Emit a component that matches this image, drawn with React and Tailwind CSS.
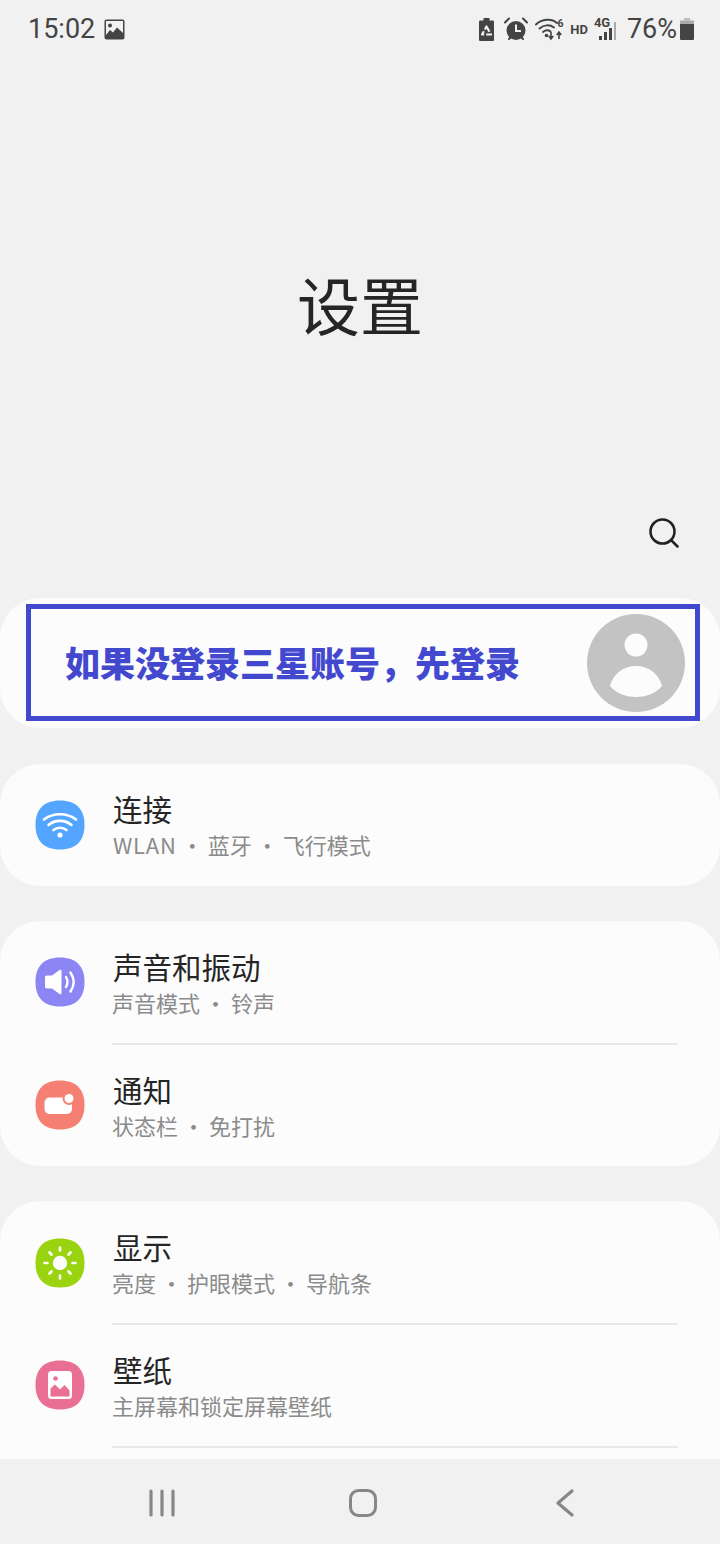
import { Search } from 'lucide-react'

const cjk = { fontFamily: '"Noto Sans CJK SC", "Noto Sans", sans-serif' }
const roboto = { fontFamily: 'Roboto, sans-serif' }

const Squircle = ({ color, children }) => (
  <svg width="50" height="50" viewBox="0 0 50 50" className="shrink-0">
    <path d="M25 0.5C41 0.5 49.5 9 49.5 25S41 49.5 25 49.5 0.5 41 0.5 25 9 0.5 25 0.5Z" fill={color} />
    {children}
  </svg>
)

const WifiIcon = () => (
  <Squircle color="#53a5ff">
    <g fill="none" stroke="#fff" strokeWidth="2.6" strokeLinecap="round">
      <path d="M9 19.5C18 12.5 32 12.5 41 19.5" />
      <path d="M13.5 25C20 19.5 30 19.5 36.5 25" />
      <path d="M18.5 30C22 27 28 27 31.500 30" />
    </g>
    <circle cx="25" cy="35" r="2.600" fill="#fff" />
  </Squircle>
)

const SoundIcon = () => (
  <Squircle color="#8c85f4">
    <path d="M10 20.5C10 19.2 10.8 18.5 12 18.5H17L24.5 13C25.6 12.3 26.5 12.8 26.5 14V36C26.5 37.2 25.6 37.7 24.5 37L17 31.5H12C10.8 31.5 10 30.8 10 29.5Z" fill="#fff" />
    <g fill="none" stroke="#fff" strokeWidth="2.4" strokeLinecap="round">
      <path d="M31 20C32.8 23 32.8 27 31 30" />
      <path d="M35.5 15.5C39.5 21.5 39.5 28.5 35.5 34.5" />
    </g>
  </Squircle>
)

const NotifyIcon = () => (
  <Squircle color="#f57f72">
    <rect x="9.500" y="17.500" width="27.500" height="16.500" rx="5" fill="#fff" />
    <circle cx="34" cy="18.500" r="6.500" fill="#f57f72" />
    <circle cx="34" cy="18.500" r="4.500" fill="#fff" />
  </Squircle>
)

const DisplayIcon = () => (
  <Squircle color="#9ad30f">
    <circle cx="25" cy="25" r="7.200" fill="#fff" />
    <g stroke="#fff" strokeWidth="2.600" strokeLinecap="round">
      <path d="M25 9.500V12.500" />
      <path d="M25 37.500V40.500" />
      <path d="M9.500 25H12.500" />
      <path d="M37.500 25H40.500" />
      <path d="M14.500 14.500L16.500 16.500" />
      <path d="M33.500 33.500L35.500 35.500" />
      <path d="M35.500 14.500L33.500 16.500" />
      <path d="M16.500 33.500L14.500 35.500" />
    </g>
  </Squircle>
)

const WallpaperIcon = () => (
  <Squircle color="#e96f95">
    <rect x="13" y="11" width="24" height="28" rx="3.500" fill="#fff" />
    <circle cx="20.500" cy="18.500" r="2.300" fill="#e96f95" />
    <path d="M15.500 36.500V28.500L20 24.500L25 29.500L29.500 25L34.500 30.500V36.500Z" fill="#e96f95" />
  </Squircle>
)

const Row = ({ icon, title, sub, divider, height, iconShift = '' }) => (
  <div className={`flex items-center pl-[35px] ${height}`}>
    <div className={`shrink-0 flex ${iconShift}`}>{icon}</div>
    <div className={`ml-[27px] mr-[42px] flex-1 h-full flex flex-col justify-center pb-[2px] ${divider ? 'border-b-2 border-[#e9e9e9] pt-[1px]' : ''}`}>
      <div className="pl-[1px] text-[29.5px] leading-[38px] text-[#252525]" style={cjk}>{title}</div>
      <div className="mt-[2px] text-[22px] leading-[30px] text-[#8b8b8b]" style={cjk}>{sub}</div>
    </div>
  </div>
)

const Dot = () => <span className="mx-[4.5px] text-[#8b8b8b]">•</span>

export default function App() {
  return (
    <div className="w-[720px] h-[1544px] bg-[#f1f1f1] flex flex-col overflow-hidden" style={cjk}>
      <div className="h-[58px] px-[26px] flex items-center justify-between shrink-0 text-[#444444]">
        <div className="flex items-center gap-[9px] pl-[2px]">
          <span className="text-[27px] leading-none" style={roboto}>15:02</span>
          <svg width="21" height="21" viewBox="0 0 21 21">
            <rect x="0.500" y="0.500" width="20" height="20" rx="2" fill="#444" />
            <rect x="2" y="2" width="17" height="14" fill="#f1f1f1" />
            <circle cx="6" cy="6.500" r="2" fill="#444" />
            <path d="M2 16L6 11L9 13.500L13 8.500L19 14V17H2Z" fill="#444" />
          </svg>
        </div>
        <div className="flex items-center">
          <svg width="15" height="23" viewBox="0 0 15 23" className="mr-[10px]">
            <path d="M4.500 0H10.500V2.500H13.500C14.500 2.500 15 3 15 4V21.500C15 22.500 14.500 23 13.500 23H1.500C0.500 23 0 22.500 0 21.500V4C0 3 0.500 2.500 1.500 2.500H4.500Z" fill="#444" />
            <path d="M7.500 8.500L12 16.500H3Z" fill="none" stroke="#f1f1f1" strokeWidth="2.200" strokeDasharray="6 2" strokeLinejoin="round" />
          </svg>
          <svg width="24" height="24" viewBox="0 0 24 24" className="mr-[7px]">
            <circle cx="12" cy="13.500" r="9.500" fill="#444" />
            <path d="M12 7.500V14H17" fill="none" stroke="#f1f1f1" strokeWidth="2" />
            <path d="M1 5.500L5 1.500M23 5.500L19 1.500M5 22L6.500 20.500M19 22L17.500 20.500" stroke="#444" strokeWidth="2" strokeLinecap="round" />
          </svg>
          <svg width="29" height="24" viewBox="0 0 29 24" className="mr-[6px]">
            <g fill="none" stroke="#444" strokeWidth="2" strokeLinecap="round">
              <path d="M1 7.500C7 1.500 17 1.500 22 6" />
              <path d="M4.500 11.500C9 7.500 15 7.500 19 10.500" />
              <path d="M8 15C10.500 13 13.500 13 15.500 14.500" />
            </g>
            <circle cx="11.500" cy="18.500" r="1.800" fill="#444" />
            <path d="M16 15V21M13.800 19L16 22L18.200 19M24 22V15M21.800 18L24 15L26.200 18" fill="none" stroke="#444" strokeWidth="1.600" />
            <text x="22.500" y="9.500" fontSize="10.500" fontWeight="700" fill="#444" fontFamily="Roboto, sans-serif">6</text>
          </svg>
          <span className="text-[13px] font-bold leading-none mr-[6px]" style={roboto}>HD</span>
          <div className="relative w-[25px] h-[24px] mr-[8px]">
            <span className="absolute left-0 top-[-1px] text-[13px] font-bold leading-none" style={roboto}>4G</span>
            <svg width="25" height="24" viewBox="0 0 25 24">
              <rect x="5" y="19" width="3" height="4" fill="#444" />
              <rect x="10" y="15" width="3" height="8" fill="#444" />
              <rect x="15" y="11" width="3" height="12" fill="#444" />
              <rect x="20" y="5" width="2" height="18" fill="#aaa" />
            </svg>
          </div>
          <span className="text-[27px] leading-none mr-[3px]" style={roboto}>76%</span>
          <svg width="14" height="22" viewBox="0 0 14 22">
            <path d="M4 0H10V2.500H4Z" fill="#bbb" />
            <rect x="0" y="2.500" width="14" height="4" fill="#aaa" />
            <path d="M0 6H14V20.500C14 21.500 13.500 22 12.500 22H1.500C0.500 22 0 21.500 0 20.500Z" fill="#444" />
          </svg>
        </div>
      </div>

      <div className="h-[540px] shrink-0 relative flex justify-center">
        <h1 className="mt-[205px] text-[63px] leading-[80px] font-normal text-[#252525]" style={cjk}>设置</h1>
        <Search size={36} strokeWidth={1.7} className="absolute right-[38px] top-[457px] text-[#222222]" />
      </div>

      <div className="h-[130px] shrink-0 rounded-[40px] bg-[#fcfcfc] relative">
        <div className="absolute left-[26px] right-[20px] top-[6px] h-[117px] border-[5px] border-[#4349cf] flex items-center justify-between pl-[34px] pr-[10px]">
          <span className="text-[35px] font-black text-[#4349cf] whitespace-nowrap" style={cjk}>如果没登录三星账号，先登录</span>
          <svg width="98" height="98" viewBox="0 0 98 98">
            <circle cx="49" cy="49" r="49" fill="#c3c3c3" />
            <circle cx="49" cy="31" r="11.500" fill="#fcfcfc" />
            <path d="M23 72C26 60 36 52 49 52S72 60 75 72C69 79 60 83 49 83S29 79 23 72Z" fill="#fcfcfc" />
          </svg>
        </div>
      </div>

      <div className="mt-[36px] shrink-0 rounded-[40px] bg-[#fcfcfc] overflow-hidden">
        <Row
          height="h-[122px]"
          icon={<WifiIcon />}
          title="连接"
          sub={<><span className="pl-[1px] tracking-[0.75px]">WLAN</span><Dot />蓝牙<Dot />飞行模式</>}
        />
      </div>

      <div className="mt-[35px] shrink-0 rounded-[40px] bg-[#fcfcfc] overflow-hidden">
        <Row
          height="h-[124px]"
          divider
          iconShift="-mt-[2px]"
          icon={<SoundIcon />}
          title="声音和振动"
          sub={<>声音模式<Dot />铃声</>}
        />
        <Row
          height="h-[121px]"
          iconShift="-mt-[1px]"
          icon={<NotifyIcon />}
          title="通知"
          sub={<>状态栏<Dot />免打扰</>}
        />
      </div>

      <div className="mt-[35px] flex-1 min-h-0 rounded-t-[40px] bg-[#fcfcfc] overflow-hidden">
        <Row
          height="h-[124px]"
          divider
          icon={<DisplayIcon />}
          title="显示"
          sub={<>亮度<Dot />护眼模式<Dot />导航条</>}
        />
        <Row
          height="h-[123px]"
          divider
          iconShift="-mt-[4px]"
          icon={<WallpaperIcon />}
          title="壁纸"
          sub="主屏幕和锁定屏幕壁纸"
        />
      </div>

      <div className="h-[85px] shrink-0 flex items-center justify-between pl-[149px] pr-[145px] pt-[3px]">
        <svg width="26" height="28" viewBox="0 0 26 28">
          <path d="M2 2V26M13 2V26M24 2V26" stroke="#878787" strokeWidth="3.200" strokeLinecap="round" />
        </svg>
        <svg width="28" height="28" viewBox="0 0 28 28" className="mr-[4px]">
          <rect x="1.500" y="1.500" width="25" height="25" rx="8" fill="none" stroke="#878787" strokeWidth="3" />
        </svg>
        <svg width="20" height="28" viewBox="0 0 20 28">
          <path d="M17 2L3 14L17 26" fill="none" stroke="#878787" strokeWidth="3.200" strokeLinecap="round" strokeLinejoin="round" />
        </svg>
      </div>
    </div>
  )
}
